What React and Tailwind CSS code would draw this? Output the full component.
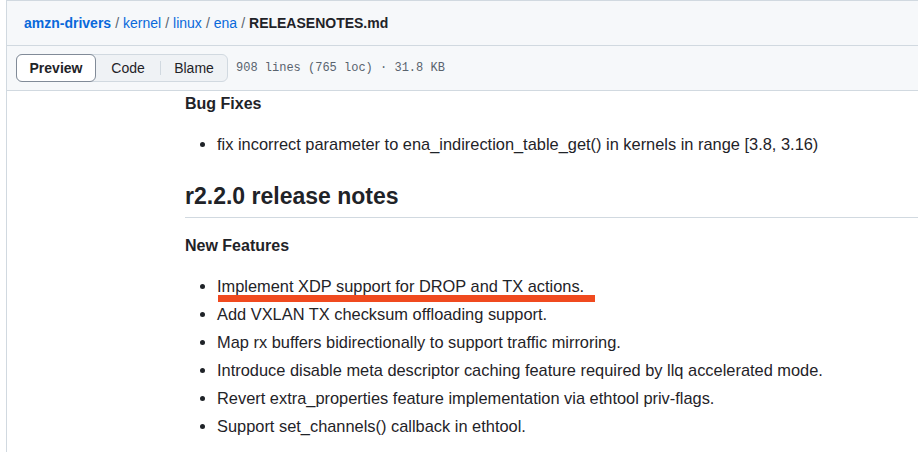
const features = [
  'Implement XDP support for DROP and TX actions.',
  'Add VXLAN TX checksum offloading support.',
  'Map rx buffers bidirectionally to support traffic mirroring.',
  'Introduce disable meta descriptor caching feature required by llq accelerated mode.',
  'Revert extra_properties feature implementation via ethtool priv-flags.',
  'Support set_channels() callback in ethtool.',
];

export default function App() {
  return (
    <div className="h-[452px] w-[918px] overflow-hidden bg-white font-['Liberation_Sans',Arial,sans-serif] text-[#1f2328]">
      <div className="ml-[6px] h-full border-l border-t border-[#d1d9e0]">
        {/* Breadcrumb */}
        <div className="flex h-[45px] items-center border-b border-[#d1d9e0] bg-[#f6f8fa] pl-[17px] text-[14px]">
          <a className="font-semibold text-[#0969da]">amzn-drivers</a>
          <span className="mx-[4px] text-[#59636e]">/</span>
          <a className="text-[#0969da]">kernel</a>
          <span className="mx-[4px] text-[#59636e]">/</span>
          <a className="text-[#0969da]">linux</a>
          <span className="mx-[4px] text-[#59636e]">/</span>
          <a className="text-[#0969da]">ena</a>
          <span className="mx-[4px] text-[#59636e]">/</span>
          <span className="font-bold">RELEASENOTES.md</span>
        </div>

        {/* Toolbar */}
        <div className="flex h-[45px] items-center gap-2 border-b border-[#d1d9e0] bg-[#f6f8fa] pl-[9px]">
          <div className="flex h-[28px] items-center rounded-md border border-[#d1d9e0] bg-[#eff2f5] text-[14px]">
            <button className="-ml-px -my-px flex h-[28px] w-[80px] items-center justify-center rounded-md border border-[#818b98] bg-white font-semibold">
              Preview
            </button>
            <button className="flex h-full w-[64px] items-center justify-center">Code</button>
            <span className="h-[14px] w-px bg-[#d1d9e0]" />
            <button className="flex h-full w-[66px] items-center justify-center">Blame</button>
          </div>
          <span className="font-['Liberation_Mono',monospace] text-[12px] text-[#59636e]">
            908 lines (765 loc) · 31.8 KB
          </span>
        </div>

        {/* Markdown body */}
        <div className="pl-[178px] pt-[3px] text-[16.4px]">
          <h3 className="mb-[18px] text-[16px] font-semibold leading-[20px]">Bug Fixes</h3>
          <ul className="list-disc pl-[32px] leading-[24px]">
            <li>fix incorrect parameter to ena_indirection_table_get() in kernels in range [3.8, 3.16)</li>
          </ul>
          <h2 className="mt-[25px] border-b border-[#d1d9e0] pb-[6px] text-[23px] font-semibold leading-[30px]">
            r2.2.0 release notes
          </h2>
          <h3 className="mt-[18px] mb-[18px] text-[16px] font-semibold leading-[20px]">New Features</h3>
          <ul className="list-disc pl-[32px] leading-[24px]">
            {features.map((f, i) => (
              <li key={i} className={i > 0 ? 'relative mt-[4px]' : 'relative'}>
                {f}
                {i === 0 && <span className="absolute left-px top-[21px] h-[7px] w-[377px] bg-[#f04a1f]" />}
              </li>
            ))}
          </ul>
        </div>
      </div>
    </div>
  );
}
